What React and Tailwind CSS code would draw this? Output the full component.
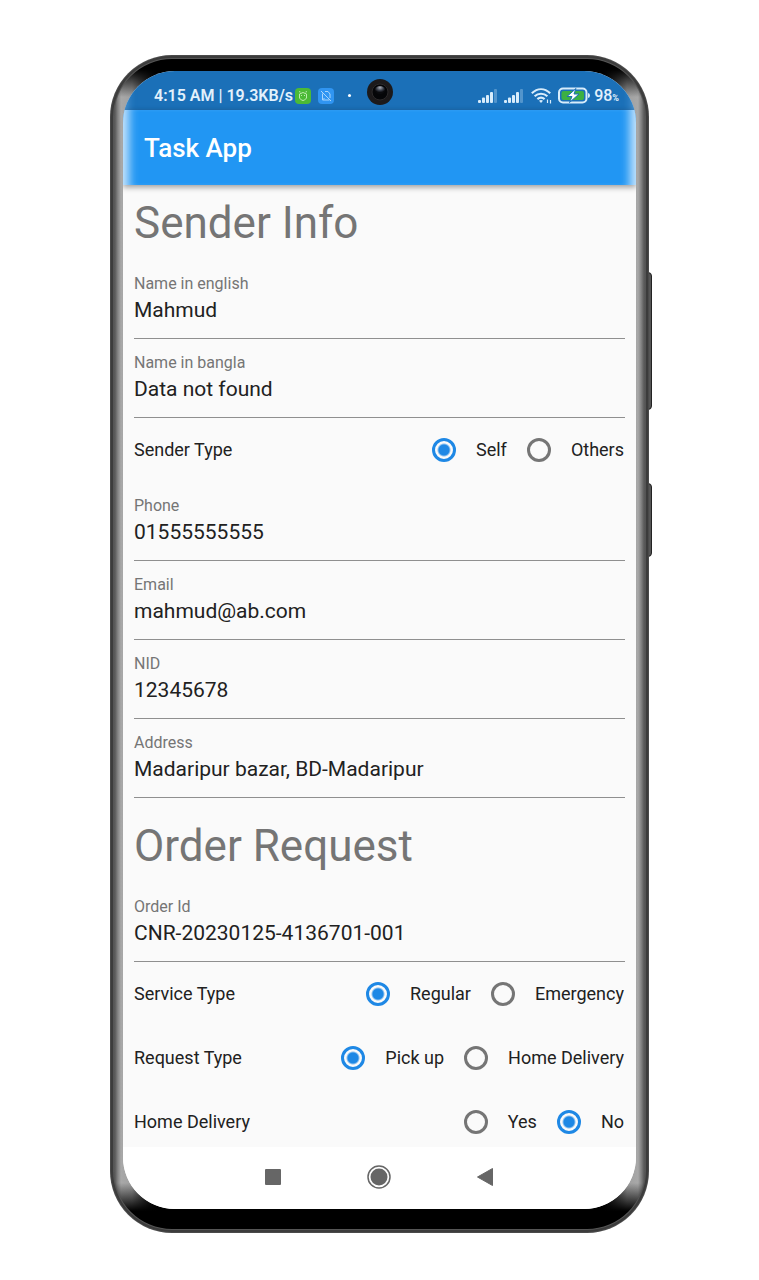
import React from "react";

function Signal() {
  return (
    <svg className="h-[15px] w-5 shrink-0" viewBox="0 0 20 15" fill="#d8ecfb" aria-hidden="true">
      <rect x="0" y="12" width="3" height="3" rx="1" />
      <rect x="4" y="9.5" width="3" height="5.5" rx="1" />
      <rect x="8" y="7" width="3" height="8" rx="1" />
      <rect x="12" y="4" width="3" height="11" rx="1" />
      <rect x="16" y="1" width="3" height="14" rx="1" opacity="0.3" />
    </svg>
  );
}

function Wifi() {
  return (
    <svg className="h-4 w-[22px] shrink-0" viewBox="0 0 22 16" fill="none" stroke="#d8ecfb" strokeWidth="2.2" aria-hidden="true">
      <path d="M.8 5.2C6.5-.1 13.500-.1 19.200 5.200" />
      <path d="M3.600 8.300c3.700-3.400 9.100-3.400 12.800 0" />
      <path d="M6.400 11.200c2.200-1.900 5-1.900 7.200 0" />
      <path d="M8 12.800q2-1.600 4 0l-2 2.300z" fill="#d8ecfb" stroke="none" />
      <path d="M16.500 11.500v3.500M19.500 12v3.500" strokeWidth="1.200" />
    </svg>
  );
}

function Battery() {
  return (
    <svg className="h-[17px] w-8 shrink-0" viewBox="0 0 32 17" aria-hidden="true">
      <rect x="1" y="1.500" width="27.500" height="14" rx="4" fill="none" stroke="#d8ecfb" strokeWidth="2" />
      <rect x="3.500" y="4" width="22.500" height="9" rx="2" fill="#3cb043" />
      <path d="M30 6q2 .3 2 2.500t-2 2.500z" fill="#d8ecfb" />
      <path d="M18 1.500 9 9.500h5l-2.500 6 9.500-8.500h-5z" fill="#fff" stroke="#1b6fb8" strokeWidth="1" />
    </svg>
  );
}

function StatusBar() {
  return (
    <div className="relative flex items-center justify-between bg-[#1b70b8] pt-[13px] pr-[17px] pb-[3px] pl-[31px] text-[#e3f1fc] shadow-[inset_12px_0_10px_-8px_#5b9fd8,inset_-12px_0_10px_-8px_#5b9fd8]">
      <div className="flex items-center">
        <span className="text-base leading-[23px] font-semibold whitespace-nowrap">4:15 AM | 19.3KB/s</span>
        <svg className="ml-[2px] size-4" viewBox="0 0 16 16" aria-hidden="true">
          <rect width="16" height="16" rx="4" fill="#4cba36" />
          <path d="M5 4.500 4.600 3M11 4.500l.4-1.500M4.500 6Q8 3 11.500 6v4Q8 15 4.500 10z" fill="none" stroke="#bdebae" />
          <path d="M6.500 7v1M9.500 7v1" stroke="#bdebae" />
        </svg>
        <svg className="ml-[7px] size-4" viewBox="0 0 16 16" aria-hidden="true">
          <rect width="16" height="16" rx="4" fill="#3095f2" />
          <path d="M3 3l10 10M4.500 5.500V12h7M4.500 12l2-2M7 3.500h3L12 6v4" fill="none" stroke="#a9d5fb" />
        </svg>
        <span className="ml-[14px] size-[3px] rounded-full bg-white" />
      </div>
      <svg className="absolute top-2 left-1/2 size-[26px] -translate-x-1/2" viewBox="0 0 26 26" aria-hidden="true">
        <defs>
          <radialGradient id="lens" cx="0.5" cy="0.2" r="0.6">
            <stop offset="0" stopColor="#a9aeb8" />
            <stop offset="0.6" stopColor="#3a3f4a" />
            <stop offset="1" stopColor="#0a0b0e" />
          </radialGradient>
        </defs>
        <circle cx="13" cy="13" r="13" fill="#1c1a1b" />
        <circle cx="13" cy="13" r="8" fill="#050608" stroke="#2c2a2b" />
        <ellipse cx="13" cy="11" rx="5" ry="4" fill="url(#lens)" />
      </svg>
      <div className="flex items-center">
        <Signal />
        <span className="w-[6px]" />
        <Signal />
        <span className="w-[7px]" />
        <Wifi />
        <span className="w-[5px]" />
        <Battery />
        <span className="ml-1 flex items-baseline text-base leading-[23px] font-medium">98<span className="text-[9px] leading-3 font-bold">%</span></span>
      </div>
    </div>
  );
}

function Field({ id, label, value }) {
  return (
    <div className="flex flex-col border-b border-[#8f8f8f] pt-[14px] pb-3">
      <label htmlFor={id} className="text-base leading-5 text-[#757575]">{label}</label>
      <input id={id} defaultValue={value} className="mt-px h-[31px] w-full bg-transparent text-[21px] text-[#212121] outline-none" />
    </div>
  );
}

function Choice({ label, name, options, selected, last }) {
  return (
    <div role="radiogroup" aria-label={label} className={`flex items-center justify-between pt-5 pr-px text-lg leading-6 text-[#212121] ${last ? "pb-[13px]" : "pb-5"}`}>
      <span>{label}</span>
      <div className="flex gap-5">
        {options.map((o) => (
          <label key={o} className="flex items-center gap-5">
            <input
              type="radio"
              name={name}
              defaultChecked={o === selected}
              className="size-6 appearance-none rounded-full border-[3px] border-[#757575] checked:border-[#1e88e5] checked:bg-[radial-gradient(circle,#1e88e5_5px,transparent_7px)]"
            />
            {o}
          </label>
        ))}
      </div>
    </div>
  );
}

function NavBar() {
  return (
    <nav className="flex items-center justify-center gap-[82px] bg-white pt-[18px] pr-[2px] pb-5 text-[#666]">
      <button type="button" aria-label="Recent apps" className="flex size-6 items-center justify-center">
        <svg className="size-4" viewBox="0 0 16 16" fill="currentColor"><rect width="16" height="16" rx="1" /></svg>
      </button>
      <button type="button" aria-label="Home" className="flex size-6 items-center justify-center">
        <svg className="size-6" viewBox="0 0 24 24" fill="currentColor">
          <circle cx="12" cy="12" r="11" fill="none" stroke="currentColor" strokeWidth="1.500" />
          <circle cx="12" cy="12" r="8.500" />
        </svg>
      </button>
      <button type="button" aria-label="Back" className="flex size-6 items-center justify-center">
        <svg className="h-[18px] w-4" viewBox="0 0 16 18" fill="currentColor"><path d="M15.500.5v17L.5 9z" stroke="currentColor" strokeLinejoin="round" /></svg>
      </button>
    </nav>
  );
}

export default function App() {
  return (
    <div className="flex min-h-screen justify-center bg-white px-6 pt-[55px] pb-[47px] font-[Roboto,sans-serif]">
      <div className="relative w-full max-w-[539px] self-start">
        <span className="absolute top-[217px] -right-[3px] h-[138px] w-2 rounded-sm border border-[#222] bg-[#555]" />
        <span className="absolute top-[428px] -right-[3px] h-[74px] w-2 rounded-sm border border-[#222] bg-[#555]" />
        <div className="relative rounded-[62px] bg-[linear-gradient(to_bottom,#000_14px,transparent_42px,transparent_calc(100%-50px),#000_calc(100%-22px)),linear-gradient(to_right,#333_0px,#555_3px,#5a5a5a_5px,#868686_8px,#a8a8a8_11px,#a0a0a0_22px,#000_46px,#000_calc(100%-46px),#a0a0a0_calc(100%-22px),#a8a8a8_calc(100%-11px),#868686_calc(100%-8px),#5a5a5a_calc(100%-5px),#555_calc(100%-3px),#333_100%)] px-[13px] pt-4 pb-6 shadow-[inset_0_0_0_1px_#4a4a4a,inset_0_0_0_3px_#3c3c3c,inset_0_0_0_4px_#555]">
          <div className="relative overflow-hidden rounded-[52px] bg-[#fafafa]">
            <StatusBar />
            <header className="relative z-10 bg-[#2196f3] px-[21px] pt-[23px] pb-[21px] text-white shadow-[inset_14px_0_10px_-8px_#c4e3fc,inset_-14px_0_10px_-8px_#c4e3fc,0_2px_6px_rgba(0,0,0,0.4)]">
              <h1 className="text-[26px] leading-[31px] font-medium">Task App</h1>
            </header>
            <main className="px-[11px]">
              <section>
                <h2 className="pt-[11px] pb-[9px] text-[44px] leading-[55px] text-[#757575]">Sender Info</h2>
                <Field id="name-en" label="Name in english" value="Mahmud" />
                <Field id="name-bn" label="Name in bangla" value="Data not found" />
                <Choice label="Sender Type" name="sender" options={["Self", "Others"]} selected="Self" />
                <Field id="phone" label="Phone" value="01555555555" />
                <Field id="email" label="Email" value="mahmud@ab.com" />
                <Field id="nid" label="NID" value="12345678" />
                <Field id="address" label="Address" value="Madaripur bazar, BD-Madaripur" />
              </section>
              <section className="pt-[10px]">
                <h2 className="pt-[11px] pb-[9px] text-[44px] leading-[55px] text-[#757575]">Order Request</h2>
                <Field id="order" label="Order Id" value="CNR-20230125-4136701-001" />
                <Choice label="Service Type" name="service" options={["Regular", "Emergency"]} selected="Regular" />
                <Choice label="Request Type" name="request" options={["Pick up", "Home Delivery"]} selected="Pick up" />
                <Choice label="Home Delivery" name="delivery" options={["Yes", "No"]} selected="No" last />
              </section>
            </main>
            <NavBar />
          </div>
        </div>
      </div>
    </div>
  );
}
